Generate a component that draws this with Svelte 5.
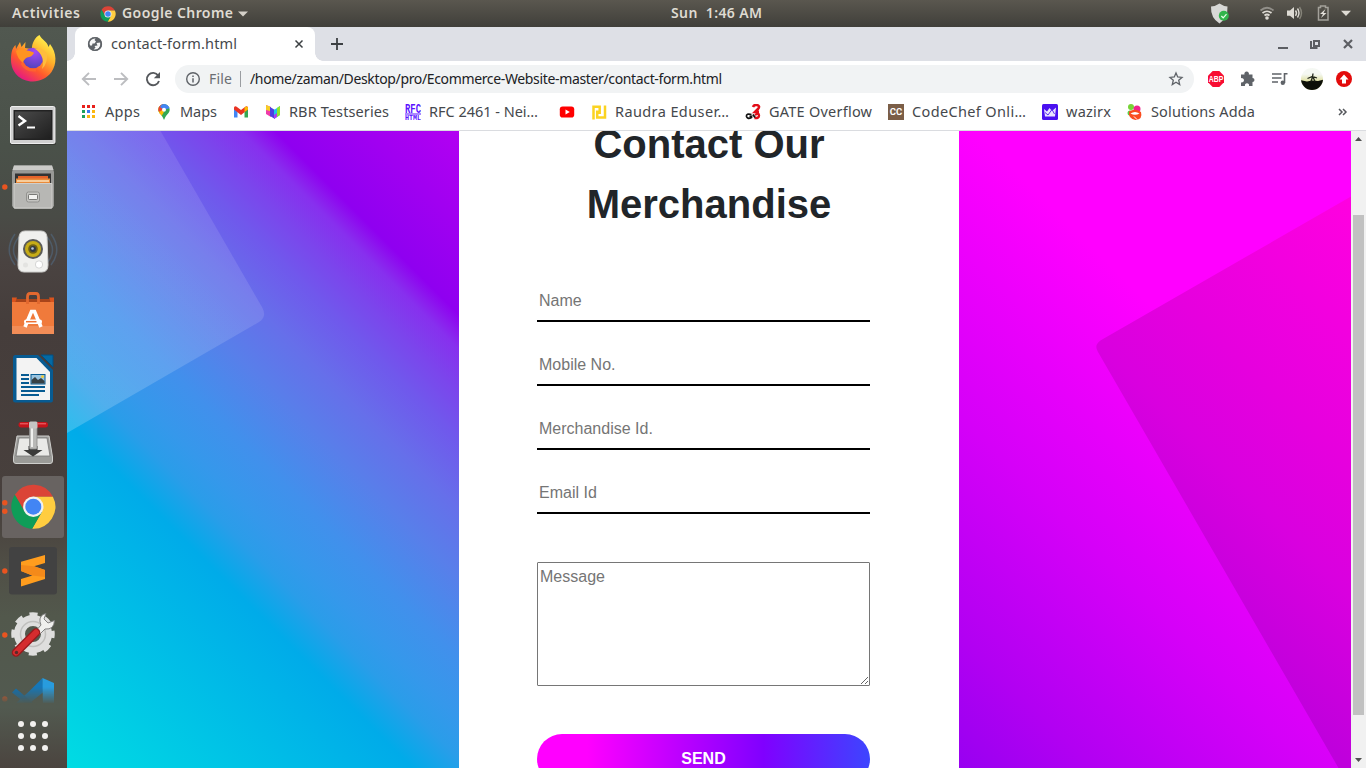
<script>
  const bookmarks = [
    { icon: 'apps', label: 'Apps', w: 35 },
    { icon: 'maps', label: 'Maps', w: 37 },
    { icon: 'gmail' },
    { icon: 'rbr', label: 'RBR Testseries', w: 100 },
    { icon: 'rfc', label: 'RFC 2461 - Nei…', w: 109, box: 114 },
    { icon: 'youtube' },
    { icon: 'raudra', label: 'Raudra Eduser…', w: 114 },
    { icon: 'gate', label: 'GATE Overflow', w: 103 },
    { icon: 'codechef', label: 'CodeChef Onli…', w: 114 },
    { icon: 'wazirx', label: 'wazirx', w: 45 },
    { icon: 'adda', label: 'Solutions Adda', w: 104 }
  ];

  const dock = [
    { icon: 'firefox', dots: 0 },
    { icon: 'terminal', dots: 0 },
    { icon: 'files', dots: 1 },
    { icon: 'speaker', dots: 0 },
    { icon: 'software', dots: 0 },
    { icon: 'writer', dots: 0 },
    { icon: 'torrent', dots: 0 },
    { icon: 'chrome', dots: 2 },
    { icon: 'sublime', dots: 1 },
    { icon: 'tools', dots: 1 },
    { icon: 'code', dots: 1 }
  ];

  const fields = ['Name', 'Mobile No.', 'Merchandise Id.', 'Email Id'];

  // Tracks a label so that it fills a given width.
  function fit(node, width) {
    const natural = node.getBoundingClientRect().width;
    const gaps = node.textContent.length - 1;
    node.style.letterSpacing = `${(width - natural) / gaps}px`;
    node.style.width = `${width}px`;
  }
</script>

{#snippet chromeLogo()}
  <path fill="#db4437" d="M24 14H43.6A22 22 0 0 0 5.54 12.03L15.34 29Z" />
  <path fill="#ffcd40" d="M24 14H43.6A22 22 0 0 1 22.86 45.97L32.66 29Z" />
  <path fill="#0f9d58" d="M5.54 12.03A22 22 0 0 0 22.86 45.97L32.66 29H15.34Z" />
  <circle cx="24" cy="24" r="10.2" fill="#f1f1f1" />
  <circle cx="24" cy="24" r="8" fill="#4285f4" />
{/snippet}

<div class="desktop">
  <header class="topbar">
    <div class="top-left">
      <span class="t" use:fit={68}>Activities</span>
      <svg class="mini" width="16" height="16" viewBox="1 1 46 46">{@render chromeLogo()}</svg>
      <span class="t" use:fit={111}>Google Chrome</span>
      <svg width="10" height="6" viewBox="0 0 10 6"><path d="M0 .5H10L5 5.5Z" fill="#d4d0c8" /></svg>
    </div>
    <span class="t clock" use:fit={91}>Sun&nbsp; 1:46 AM</span>
    <svg class="tray" width="160" height="27" viewBox="1206 0 160 27">
      <path d="M1219.500 3.500Q1223 6 1227.500 6.500Q1228 18 1219.500 23.500Q1210.500 18 1211 6.500Q1216 6 1219.500 3.500Z" fill="#d8d8d6" />
      <circle cx="1223.800" cy="15.800" r="5" fill="#31b44b" />
      <path d="M1221.300 16L1223.200 17.800L1226.500 14.200" fill="none" stroke="#e7ffe9" stroke-width="1.200" />
      <g fill="none" stroke-width="1.700">
        <path d="M1260.500 10.500Q1267 5 1273.500 10.500" stroke="#918f89" />
        <path d="M1262.500 13Q1267 9.500 1271.500 13" stroke="#dedbd4" />
        <path d="M1264.500 15.500Q1267 13.500 1269.500 15.500" stroke="#dedbd4" />
      </g>
      <circle cx="1267" cy="18" r="1.800" fill="#dedbd4" />
      <path d="M1287 10.500H1290L1294 7V19L1290 15.800H1287Z" fill="#dedbd4" />
      <g fill="none" stroke-width="1.400">
        <path d="M1295.500 10.500Q1297.500 13 1295.500 15.800" stroke="#dedbd4" />
        <path d="M1297.500 8.500Q1300.500 13 1297.500 17.500" stroke="#dedbd4" />
        <path d="M1299.500 7Q1303.500 13 1299.500 19" stroke="#858379" />
      </g>
      <path d="M1318.500 7.500H1320.500V6H1325.500V7.500H1328V20H1318.500Z" fill="none" stroke="#a3a19a" stroke-width="1.500" />
      <path d="M1325.500 9L1320 14H1323L1321 18L1326.500 13H1323.500Z" fill="#e3e0da" />
      <path d="M1341 10.800H1351L1346 16Z" fill="#dedbd4" />
    </svg>
  </header>

  <div class="main">
    <nav class="dock">
      {#each dock as item}
        <div class="slot" class:active={item.icon === 'chrome'} class:cut={item.icon === 'code'}>
          <svg width="67" height="64" viewBox="0 0 67 64">
            {#if item.dots === 1}<circle cx="4.800" cy="32" r="2.700" fill="#e95420" />{/if}
            {#if item.dots === 2}
              <circle cx="4.800" cy="27.700" r="2.700" fill="#e95420" /><circle cx="4.800" cy="36.200" r="2.700" fill="#e95420" />
            {/if}
            {#if item.icon === 'firefox'}
              <defs>
                <linearGradient id="ff" x1=".85" y1=".1" x2=".25" y2="1">
                  <stop offset="0" stop-color="#fff44f" /><stop offset=".35" stop-color="#ffb02a" /><stop offset=".65" stop-color="#ff5a2c" /><stop offset="1" stop-color="#e3128b" />
                </linearGradient>
                <radialGradient id="ffp" cx=".6" cy=".2" r=".9"><stop offset="0" stop-color="#a54af5" /><stop offset="1" stop-color="#4a43b8" /></radialGradient>
              </defs>
              <path fill="url(#ff)" d="M39.500 8C42 13 47 14 48.500 20L50 17C57 26 57 37 51.500 45C47 51 40 54.500 33 54.500C20 54.500 11 45 11 33C11 26 12 21 15.500 18L16 22L20 15L21.500 20L25.500 15L25 21L32 22C31.500 17 35 10 39.500 8Z" />
              <circle cx="33" cy="31" r="10.300" fill="url(#ffp)" />
              <path fill="#ff9320" d="M16 24Q22 19 27 23.500Q33 24.500 34 26Q32 30 27 30.500Q23 33 23 36Q17 31 16 24Z" />
              <path fill="#ffbd3d" d="M34 21.500Q43 20 47 27Q48 36 42 42Q44.500 34 41 28Q38 23 34 21.500Z" />
              <path fill="none" stroke="#ff6b2b" stroke-width="3" d="M22 36Q26 44 36 43" opacity=".7" />
            {:else if item.icon === 'terminal'}
              <defs><linearGradient id="tm" x1="0" y1="0" x2="1" y2="1"><stop offset="0" stop-color="#4b4b4b" /><stop offset="1" stop-color="#1f1f1f" /></linearGradient></defs>
              <rect x="10" y="15" width="46" height="39" rx="1.500" fill="#252624" opacity=".5" />
              <rect x="10.500" y="15.500" width="44.500" height="37" rx="1.500" fill="#d0d0d0" stroke="#eee" />
              <rect x="13.500" y="19" width="39" height="30" fill="#222" />
              <rect x="15" y="20.500" width="36" height="27" fill="url(#tm)" />
              <path d="M18.500 25L25 30L18.500 34.500" fill="none" stroke="#fff" stroke-width="2.400" /><path d="M27 36.500H35" stroke="#fff" stroke-width="2" />
            {:else if item.icon === 'files'}
              <path d="M14 10.500H52L54 17V51L51 54H15L12 51V17Z" fill="#989996" />
              <path d="M14 10.500H52L53.500 15H12.500Z" fill="#cacac7" />
              <rect x="15" y="18.500" width="36" height="11" fill="#333" />
              <path d="M18 21H48V29H18Z" fill="#e5642b" /><path d="M16 23.500H50V29H16Z" fill="#e98b3b" />
              <path d="M17 26H49" stroke="#fff0cf" stroke-width="1.300" />
              <path d="M14 28.500H52V53H14Z" fill="#b7b7b4" stroke="#cfcfcc" />
              <rect x="26.500" y="37" width="13" height="10" rx="2" fill="#c4c4c1" stroke="#92928f" /><rect x="28.500" y="39.500" width="9" height="5" rx=".8" fill="#f2f2f0" stroke="#5d5d5b" stroke-width=".8" />
            {:else if item.icon === 'speaker'}
              <g fill="none" stroke="#526981" stroke-width="1.500" opacity=".6"><path d="M15 15Q3.500 31 15 46M19 18Q8 31 19 44M51 15Q62.500 31 51 46M47 18Q58 31 47 44" /></g>
              <path d="M25 12H41Q46.500 12 47 18L48 46Q48 53 42 53H24Q18 53 18 46L19 18Q19.500 12 25 12Z" fill="#f0f0ee" stroke="#cfcfcd" />
              <circle cx="33" cy="30" r="10" fill="#5a5a58" /><circle cx="33" cy="30" r="8" fill="#c6ac18" /><circle cx="33" cy="30" r="4.800" fill="#6e6017" /><circle cx="33" cy="30" r="3" fill="#303845" /><circle cx="32.500" cy="29.500" r="1.300" fill="#bcc8da" />
              <circle cx="25.500" cy="46" r="2.500" fill="#e3e3e1" /><rect x="35.500" y="42" width="7" height="7" rx="3" fill="#fff" stroke="#ccc" stroke-width=".8" />
            {:else if item.icon === 'software'}
              <path d="M12.500 16H53.500V25H12.500Z" fill="#a9441a" /><path d="M12 14.500H17L15 20H12ZM54 14.500H49L51 20H54Z" fill="#d9541e" />
              <path d="M12 19H54V51H12Z" fill="#f07a3b" /><path d="M12 43H54V51H12Z" fill="#f28d57" />
              <path d="M27.500 22V15Q27.500 11.500 30 11.500H36Q38.500 11.500 38.500 15V22" transform="translate(0 -1)" fill="none" stroke="#e2682f" stroke-width="2.800" />
              <path d="M25 44L31.500 28.500H34.500L41 44" fill="none" stroke="#fff" stroke-width="3.600" /><rect x="24" y="36.500" width="18" height="4.500" rx="2" fill="#fff" /><path d="M26 38.700H36.500" stroke="#ee7235" stroke-width="1.500" />
            {:else if item.icon === 'writer'}
              <path d="M41 8H53V20Z" fill="#0369a3" stroke="#024f80" />
              <path d="M15.500 8H38L53 23V53Q53 55.500 51 55.500H15.500Q13 55.500 13 53V10.500Q13 8 15.500 8Z" fill="#075b92" />
              <path d="M16.500 11H36.500L50 25V53H16.500Z" fill="#f3f3f3" />
              <g stroke="#075b92" stroke-width="1.900"><path d="M21 28H29M21 32H29M21 36H29M21 40H45M21 44H45M21 48H39" /></g>
              <rect x="31" y="27.500" width="14" height="9.500" fill="#9ac4e0" stroke="#075b92" /><path d="M31.500 36V33L35 30L38 33L41 31L44.500 34V36.500H31.500Z" fill="#374044" /><circle cx="42.500" cy="29.700" r="1.400" fill="#f3cc31" />
            {:else if item.icon === 'torrent'}
              <path d="M17 25H49L52.500 46V50Q52.500 52.500 50 52.500H16Q13.500 52.500 13.500 50V46Z" fill="#9b9b98" stroke="#cfcfcd" />
              <path d="M19 27H47L50 45H16Z" fill="#e9e9e7" stroke="#777" stroke-width=".8" />
              <path d="M28.500 35H37.500V39H42.500L33 45.500L23.500 39H28.500Z" fill="#3b3b3a" />
              <rect x="29.500" y="12" width="7.500" height="26" rx="1" fill="#b9b9b7" stroke="#888" stroke-width=".8" /><path d="M32 16V36" stroke="#f0f0ee" stroke-width="2" />
              <rect x="18.500" y="11" width="29.500" height="5.500" rx="2.700" fill="#c4151c" /><path d="M20 12.800H28M38 12.800H46" stroke="#f36f72" stroke-width="1" /><rect x="29" y="10.500" width="8.500" height="7" rx="1.500" fill="#c5c5c3" />
            {:else if item.icon === 'chrome'}
              <g transform="translate(9.300 7.700)">{@render chromeLogo()}</g>
            {:else if item.icon === 'sublime'}
              <rect x="9" y="8" width="48" height="47.500" rx="3" fill="#424242" />
              <path d="M21 22.700L45 16V24L34 27.300L45 31V40L21 47.500V40L32.500 36.500L21 32Z" fill="#ff9d1e" />
              <path d="M34 27.300L45 31V38L32 36.500L21 32V26Z" fill="#f48a1a" />
            {:else if item.icon === 'tools'}
              <circle cx="33" cy="31" r="13.500" fill="none" stroke="#dededd" stroke-width="11" />
              <circle cx="33" cy="31" r="19.500" fill="none" stroke="#dededd" stroke-width="4.500" stroke-dasharray="8 7.300" stroke-dashoffset="4" />
              <circle cx="33" cy="31" r="12.500" fill="none" stroke="#bfbfbd" stroke-width="1.500" />
              <path d="M35 29L41 22Q38 15 43 11.500L46 10.500L44 16L48 20L54.500 17.500Q54 27 45 26L39 32Z" fill="#f0f0ee" stroke="#777" stroke-width=".9" />
              <path d="M16 49.500L36 29.500" stroke="#961a1c" stroke-width="8.500" stroke-linecap="round" /><path d="M16 49.500L36 29.500" stroke="#d52c2e" stroke-width="6" stroke-linecap="round" /><circle cx="16.500" cy="49.500" r="1.700" fill="#5a2a2a" />
            {:else}
              <path d="M42.500 11L29 24.500L16 36H30L43.500 25Z" fill="#1677b8" /><path d="M42.500 11L54 16V46H43Z" fill="#289cde" /><path d="M12 25.500L16 21.500L33 36L30 40Z" fill="#0f70b3" />
            {/if}
          </svg>
        </div>
      {/each}
      <div class="launcher">
        {#each Array(9) as _}<i></i>{/each}
      </div>
    </nav>

    <section class="browser">
      <div class="tabstrip">
        <div class="tab">
          <svg width="16" height="16" viewBox="0 0 16 16"><circle cx="8" cy="8" r="7.100" fill="#5f6368" /><path d="M9 1.800L7.500 4L9 5.500L7.500 7.500H5.500L5 9.500H3L2 7.500Q1.500 4 5 2Q7 1 9 1.800ZM9.500 7L13.500 6.500Q14 10 11.500 12.500Q9 14.500 6.500 13.800L8.500 11.500L7.500 10L10.500 9.500Z" fill="#fff" opacity=".95" /><circle cx="8" cy="8" r="6.300" fill="none" stroke="#5f6368" stroke-width="1.600" /></svg>
          <span class="title" use:fit={126}>contact-form.html</span>
          <svg class="close" width="10" height="10" viewBox="0 0 10 10"><path d="M1.500 1.500L8.500 8.500M8.500 1.500L1.500 8.500" stroke="#3c4043" stroke-width="1.500" /></svg>
        </div>
        <svg class="plus" width="12" height="12" viewBox="0 0 12 12"><path d="M6 0V12M0 6H12" stroke="#3c4043" stroke-width="1.800" /></svg>
        <svg class="winbtns" width="80" height="14" viewBox="1276 37 80 14">
          <g stroke="#5c5e63" fill="none"><path d="M1278 48H1288" stroke-width="2" /><path d="M1314 41H1319V46H1314Z" stroke-width="2" /><path d="M1311 41V49M1310 48H1317.500" stroke-width="2" /><path d="M1344 40L1352 48M1352 40L1344 48" stroke-width="2.200" /></g>
        </svg>
      </div>

      <div class="toolbar">
        <svg width="88" height="34" viewBox="75 61 88 34">
          <g fill="none" stroke-width="1.900"><path d="M96 79H83M89 72.800L82.800 79L89 85.200M114 79H127M121 72.800L127.200 79L121 85.200" stroke="#bcbdc0" /><path d="M158.200 75.500A6.200 6.200 0 1 0 159 81" stroke="#55585c" /></g>
          <path d="M160 72V78.200H153.800Z" fill="#55585c" />
        </svg>
        <div class="omnibox">
          <svg width="16" height="16" viewBox="0 0 16 16"><circle cx="8" cy="8" r="6.300" fill="none" stroke="#5f6368" stroke-width="1.400" /><path d="M8 7.200V11.500M8 4.500V6" stroke="#5f6368" stroke-width="1.500" /></svg>
          <span class="scheme" use:fit={23}>File</span>
          <i class="bar"></i>
          <span class="url" use:fit={472}>/home/zaman/Desktop/pro/Ecommerce-Website-master/contact-form.html</span>
          <svg class="star" width="16" height="16" viewBox="0 0 16 16"><path d="M8 2L9.700 6L14 6.400L10.700 9.200L11.700 13.500L8 11.200L4.300 13.500L5.300 9.200L2 6.400L6.300 6Z" fill="none" stroke="#5f6368" stroke-width="1.300" /></svg>
        </div>
        <svg class="ext" width="160" height="34" viewBox="1202 61 160 34">
          <path d="M1212.700 71H1219.300L1224 75.700V82.300L1219.300 87H1212.700L1208 82.300V75.700Z" fill="#f80d32" />
          <text x="1216" y="82.200" text-anchor="middle" textLength="14.500" lengthAdjust="spacingAndGlyphs" class="abp">ABP</text>
          <path d="M1241 74.500H1244.500A2.300 2.300 0 1 1 1248.800 74.500H1252.500V78A2 2 0 1 1 1252.500 82V86H1249A2.100 2.100 0 1 0 1245 86H1241V82.300A2.200 2.200 0 1 0 1241 78.200Z" fill="#5f6368" />
          <g stroke="#5f6368" stroke-width="1.600" fill="none"><path d="M1272 74H1281.500M1272 78H1281.500M1272 82H1278M1284.500 83V73.700H1287.500" /></g><circle cx="1282.800" cy="82.700" r="2.200" fill="#5f6368" />
          <defs>
            <clipPath id="av"><circle cx="1312" cy="79" r="11" /></clipPath>
            <linearGradient id="sky" x1="0" y1="0" x2="0" y2="1"><stop offset=".3" stop-color="#f5f8f3" /><stop offset=".6" stop-color="#dfe0a0" /></linearGradient>
          </defs>
          <g clip-path="url(#av)"><rect x="1300" y="67" width="24" height="24" fill="url(#sky)" /><path d="M1300 80L1307 81.500L1312 80.500L1318 81L1324 79.500V91H1300Z" fill="#0d0f08" /><path d="M1307.500 78.500L1312.500 76.500L1317 78M1313 73.500L1312.500 77L1311 81.500M1313 77L1315 81.500" stroke="#20251a" stroke-width="1.300" fill="none" /></g>
          <circle cx="1344" cy="79" r="8" fill="#e30b0b" /><path d="M1344 74.500L1348.500 79.500H1346V83.500H1342V79.500H1339.500Z" fill="#fff" />
        </svg>
      </div>

      <div class="bookmarks">
        {#each bookmarks as b}
          <div class="bm">
            <svg width="16" height="16" viewBox="0 0 16 16">
              {#if b.icon === 'apps'}
                {#each ['#e8201b', '#e8201b', '#e8201b', '#1da15c', '#3a7af2', '#fbb70f', '#1da15c', '#fbb70f', '#fbb70f'] as c, i}
                  <rect x={1 + (i % 3) * 5} y={1 + Math.floor(i / 3) * 5} width="3" height="3" fill={c} />
                {/each}
              {:else if b.icon === 'maps'}
                <clipPath id="pin"><path d="M8 0A5.700 5.700 0 0 1 13.700 5.700C13.700 9.500 9.500 11 8.500 15Q8 16.500 7.500 15C6.500 11 2.300 9.500 2.300 5.700A5.700 5.700 0 0 1 8 0Z" /></clipPath>
                <g clip-path="url(#pin)"><rect width="16" height="16" fill="#34a853" /><path d="M0 4L4 2L9 5L2 12H0Z" fill="#fbbc04" /><path d="M0 0H7L8 6L4 8L0 6Z" fill="#ea4335" /><path d="M6 0H14V4L8 6L4 3Z" fill="#4285f4" /><path d="M2 9L6 6L8 8L5 13Z" fill="#fbbc04" /></g><circle cx="8" cy="5.700" r="2" fill="#fff" />
              {:else if b.icon === 'gmail'}
                <path d="M1 4V13.500H4.500V7Z" fill="#4285f4" /><path d="M15 4V13.500H11.500V7Z" fill="#34a853" /><path d="M1 3.500Q2 1.500 4 3L8 6L12 3Q14 1.500 15 3.500V5.500L8 11L1 5.500Z" fill="#ea3323" /><path d="M11.500 3.400Q14.500 1.500 15 4V5.500L11.500 8Z" fill="#fbbc04" />
              {:else if b.icon === 'rbr'}
                <path d="M1 1L6 3V13L1 10Z" fill="#ef3aa9" /><path d="M1 1L5 2.500V7L1 6Z" fill="#f6cd25" /><path d="M5 3L10 6V15L5 12Z" fill="#4b3fe3" /><path d="M9 6L15 2V11L9 15Z" fill="#21c5e8" /><path d="M12 4L15 2V11L12 13Z" fill="#92e52c" /><path d="M9 11L12 9V13L9 15Z" fill="#b13af0" />
              {:else if b.icon === 'rfc'}
                <text x="0" y="8.500" class="rfc" textLength="16" lengthAdjust="spacingAndGlyphs">RFC</text><path d="M0 10H16" stroke="#5a12ff" /><text x="0" y="16" class="html" textLength="16" lengthAdjust="spacingAndGlyphs">HTML</text>
              {:else if b.icon === 'youtube'}
                <rect x=".8" y="2.500" width="14.400" height="11" rx="2.800" fill="#f00" /><path d="M6.500 5.500L10.800 8L6.500 10.500Z" fill="#fff" />
              {:else if b.icon === 'raudra'}
                <path d="M2.500 15.500V2.800H8.700V10M14 1.500V13.500H6.200V6.500" fill="none" stroke="#fbd321" stroke-width="2.500" />
              {:else if b.icon === 'gate'}
                <path d="M8 3Q9 .5 12 1Q15.500 2 13 5L10 8H14" fill="none" stroke="#e20d18" stroke-width="2.600" /><path d="M10 11Q14 8 14 11.500Q14 14.500 9.500 14" fill="none" stroke="#e20d18" stroke-width="2.400" /><path d="M6.500 10.500Q1 9 1.500 12.500Q2.500 15.500 6.500 13.500V12.500H4.500M8 10.500L10 13.500" fill="none" stroke="#111" stroke-width="1.800" />
              {:else if b.icon === 'codechef'}
                <rect width="16" height="16" fill="#7b5e47" /><text x="8" y="11.300" text-anchor="middle" class="cc" textLength="12.500" lengthAdjust="spacingAndGlyphs">CC</text>
              {:else if b.icon === 'wazirx'}
                <rect width="16" height="16" rx="1.500" fill="#4a10f0" /><path d="M2 5L5 7.500L7.500 4L10 7L14 3.500L13 12.500H3Z" fill="#e9e3ff" /><path d="M3 8.500L6 11L10 5.500L12.500 10" fill="none" stroke="#5c2cf2" />
              {:else}
                <circle cx="4" cy="3" r="3" fill="#76d336" /><circle cx="10" cy="5" r="3.500" fill="#f0228e" /><circle cx="3" cy="9" r="2.500" fill="#58d145" /><path d="M2 7.500Q8 4 14 8Q16 15.500 8.500 16Q1 15 2 7.500Z" fill="#fa4d1e" /><path d="M3.500 9.500Q8 6.500 12.500 9.500Q8 12 3.500 9.500Z" fill="#fff" /><path d="M7 12.500L10 15.500" stroke="#fff" />
              {/if}
            </svg>
            {#if b.label}<span class="slotlabel" style:width={(b.box ?? b.w) + 'px'}><span class="lbl" use:fit={b.w}>{b.label}</span></span>{/if}
          </div>
        {/each}
        <svg class="more" width="10" height="8" viewBox="0 0 10 8"><path d="M1 1L4 4L1 7M5 1L8 4L5 7" fill="none" stroke="#55585c" stroke-width="1.500" /></svg>
      </div>

      <div class="view">
        <main class="page">
          <svg class="shapes" width="1284" height="637" viewBox="0 0 1284 637">
            <defs>
              <linearGradient id="dark" gradientUnits="userSpaceOnUse" x1="998" y1="351" x2="1284" y2="65">
                <stop offset="0" stop-color="#bf00dc" /><stop offset=".3" stop-color="#d900df" /><stop offset=".52" stop-color="#e600de" /><stop offset="1" stop-color="#ff00e0" />
              </linearGradient>
              <linearGradient id="light" gradientUnits="userSpaceOnUse" x1="0" y1="302" x2="180" y2="122">
                <stop offset="0" stop-color="#fff" stop-opacity=".2" /><stop offset="1" stop-color="#fff" stop-opacity=".1" />
              </linearGradient>
            </defs>
            <path d="M0 0H93.500L195.500 177Q200 186 192 191L0 302Z" fill="url(#light)" />
            <path d="M1284 65.500L1036 208Q1026 213 1031 221L1271.500 637H1284Z" fill="url(#dark)" />
          </svg>
          <div class="card">
            <h1>Contact Our Merchandise</h1>
            <form>
              {#each fields as f}<input type="text" placeholder={f} />{/each}
              <textarea placeholder="Message"></textarea>
              <button type="button">SEND</button>
            </form>
          </div>
        </main>
        <div class="scroll">
          <svg width="15" height="15" viewBox="0 0 15 15"><path d="M4 10H11L7.500 6Z" fill="#505050" /></svg>
          <div class="thumb"></div>
          <svg width="15" height="15" viewBox="0 0 15 15"><path d="M4 5H11L7.500 9Z" fill="#505050" /></svg>
        </div>
      </div>
    </section>
  </div>
</div>

<style>
  :global(body) { margin: 0; overflow: hidden; }
  svg { display: block; flex: none; }
  .desktop { width: 1366px; height: 768px; overflow: hidden; display: flex; flex-direction: column; font-family: "Noto Sans", "Open Sans", sans-serif; }
  .topbar { height: 27px; flex: none; display: grid; grid-template-columns: 671px 1fr 160px; align-items: center; background: linear-gradient(#5a574f, #403f3a); }
  .top-left { display: flex; align-items: center; padding-left: 12px; }
  .top-left .mini { margin: 0 6px 0 20px; }
  .top-left svg:last-child { margin-left: 5px; }
  .t { display: inline-block; white-space: nowrap; font-weight: 600; font-size: 14px; line-height: 20px; padding-bottom: 1px; color: #dfdbd2; }
  .clock { justify-self: start; }
  .main { flex: 1; min-height: 0; display: flex; }
  .dock { width: 67px; flex: none; display: flex; flex-direction: column; background: linear-gradient(#515850 0, #4a5149 120px, #494b46 190px, #4a4341 235px, #453d3b 300px, #48403d 480px, #504f46 540px, #52584c 590px, #525a50 680px, #4b443f 741px); }
  .slot { height: 64px; flex: none; }
  .slot.active { position: relative; }
  .slot.active::before { content: ""; position: absolute; inset: 1px 3px 1px 2px; border-radius: 3px; background: #686361; }
  .slot.active svg { position: relative; }
  .slot.cut { height: 36px; overflow: hidden; -webkit-mask-image: linear-gradient(#000 20px, transparent 37px); mask-image: linear-gradient(#000 20px, transparent 37px); }
  .launcher { display: grid; grid-template-columns: repeat(3, 6px); gap: 6px; justify-content: center; align-content: center; flex: 1; padding-right: 1px; }
  .launcher i { width: 6px; height: 6px; border-radius: 50%; background: #f2f1ef; }
  .browser { flex: 1; min-width: 0; display: flex; flex-direction: column; background: #fff; }
  .tabstrip { height: 34px; flex: none; display: flex; align-items: center; background: #dee0e6; padding-left: 8px; }
  .tab { position: relative; width: 240px; height: 34px; box-sizing: border-box; display: flex; align-items: center; padding: 0 11px 0 12px; background: #fff; border-radius: 8px 8px 0 0; }
  .tab::before, .tab::after { content: ""; position: absolute; bottom: 0; width: 8px; height: 8px; }
  .tab::before { left: -8px; background: radial-gradient(circle at 0 0, transparent 7.500px, #fff 8px); }
  .tab::after { right: -8px; background: radial-gradient(circle at 100% 0, transparent 7.500px, #fff 8px); }
  .title { display: inline-block; white-space: nowrap; margin-left: 8px; padding-bottom: 2px; font-size: 14.500px; line-height: 20px; color: #45484c; }
  .close { margin-left: auto; }
  .plus { margin-left: 16px; }
  .winbtns { margin: 0 10px 0 auto; }
  .toolbar { height: 35px; flex: none; display: flex; align-items: flex-start; padding-left: 8px; }
  .omnibox { width: 1019px; height: 28px; margin: 4px 0 0 12px; box-sizing: border-box; padding: 0 10px; border-radius: 14px; background: #f1f3f4; display: flex; align-items: center; font-size: 14px; }
  .omnibox span { display: inline-block; white-space: nowrap; line-height: 20px; }
  .scheme { margin-left: 8px; color: #6b6e73; }
  .bar { width: 1px; height: 16px; margin: 0 9px 0 8px; background: #9a9da1; }
  .url { color: #202124; }
  .star { margin-left: auto; }
  .ext { margin-left: 8px; }
  .abp { font: bold 8.500px "Liberation Sans", sans-serif; fill: #fff; }
  .bookmarks { height: 32px; flex: none; border-bottom: 1px solid #dadce0; display: flex; align-items: center; gap: 16px; padding: 0 18px 2px 14px; }
  .bm { display: flex; align-items: center; gap: 8px; }
  .slotlabel { display: block; padding-bottom: 2px; }
  .lbl { display: block; white-space: nowrap; width: max-content; font-size: 14.500px; line-height: 20px; color: #45484c; }
  .rfc { font: bold 12px "Liberation Mono", monospace; fill: #5a12ff; }
  .html { font: bold 7px "Liberation Mono", monospace; fill: #5a12ff; }
  .cc { font: bold 9.500px Roboto, sans-serif; fill: #fff; }
  .more { margin-left: auto; }
  .view { flex: 1; min-height: 0; display: flex; font-family: "Liberation Sans", sans-serif; }
  .page { position: relative; width: 1284px; overflow: hidden; display: flex; justify-content: center; background: linear-gradient(45deg, #00dce3 0, #00abe9 18%, #2a9de9 20.900%, #3598eb 22.900%, #4190ec 26.100%, #587fea 30.300%, #666fea 33.900%, #7058ec 37.500%, #7c44ec 40.100%, #8730ee 42.200%, #8b1eee 42.900%, #8f00f0 44%, #b200f2 53.500%, #d500f8 64.800%, #f0f 80.500%); }
  .shapes { position: absolute; inset: 0; }
  .card { position: relative; width: 500px; flex: none; box-sizing: border-box; background: #fff; margin-top: -17px; padding: 0 89px 0 78px; }
  h1 { margin: 0 -11px 0 0; padding: 0 35px; text-align: center; font-size: 40px; line-height: 60px; font-weight: 700; color: #212529; }
  form { padding-top: 48px; display: flex; flex-direction: column; }
  input { width: 333px; height: 40px; box-sizing: border-box; margin: 0 0 24px; padding: 0 2px; border: 0; border-bottom: 2px solid #000; background: none; font: 16px "Liberation Sans", sans-serif; }
  input::placeholder, textarea::placeholder { color: #757575; }
  textarea { width: 333px; height: 124px; box-sizing: border-box; margin: 24px 0 48px; padding: 2px; border: 1px solid #767676; border-radius: 1px; resize: both; font: 16px/24px "Liberation Sans", sans-serif; }
  button { width: 333px; height: 50px; flex: none; border: 0; border-radius: 25px; padding: 0; color: #fff; font: bold 16px "Liberation Sans", sans-serif; background: linear-gradient(90deg, #f0f 15%, #8000ff 68%, #3d45ff 100%); }
  .scroll { width: 15px; display: flex; flex-direction: column; justify-content: space-between; background: #f1f1f1; }
  .thumb { width: 11px; height: 500px; margin: 69px auto auto 2px; background: #c1c1c1; }
</style>
